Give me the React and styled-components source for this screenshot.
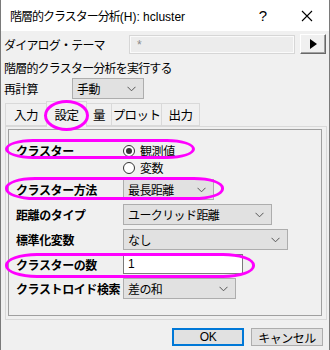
import styled, { createGlobalStyle } from "styled-components";

const GlobalStyle = createGlobalStyle`
  html, body {
    margin: 0;
    padding: 0;
    background: #f0f0f0;
  }
  * {
    box-sizing: border-box;
  }
`;

const Window = styled.div`
  position: relative;
  width: 330px;
  height: 350px;
  background: #f0f0f0;
  border-left: 1px solid #7a7a7a;
  border-right: 1px solid #7a7a7a;
  font-family: "Noto Sans CJK JP", "Noto Sans", sans-serif;
  font-size: 12px;
  color: #000;
  overflow: hidden;
`;

const TitleBar = styled.div`
  height: 31px;
  background: #fff;
  display: flex;
  align-items: center;
  padding-left: 9px;
`;

const Title = styled.div`
  flex: 1;
  font-size: 12px;
  letter-spacing: -1px;
  white-space: nowrap;
`;

const Latin = styled.span`
  font-family: "Liberation Sans", sans-serif;
  letter-spacing: 0;
`;

const TitleButton = styled.div`
  width: 44px;
  height: 31px;
  display: flex;
  align-items: center;
  justify-content: center;
  font-family: "Liberation Sans", sans-serif;
  font-size: 15px;
`;

const Body = styled.div`
  padding: 0 3px 0 3px;
`;

const Row = styled.div`
  display: flex;
  align-items: center;
  height: ${(p) => p.$h || 20}px;
  margin-top: ${(p) => p.$mt || 0}px;
`;

const Label = styled.div`
  width: ${(p) => (p.$w ? `${p.$w}px` : "auto")};
  letter-spacing: -0.8px;
  white-space: nowrap;
`;

const ThemeInput = styled.div`
  width: 166px;
  height: 19px;
  border: 1px solid #d6d6d6;
  box-shadow: inset 0 0 0 1px #fafafa;
  background: #ececec;
  color: #8a8a8a;
  font-family: "Liberation Sans", sans-serif;
  font-size: 12px;
  padding: 2px 0 0 7px;
`;

const ArrowButton = styled.div`
  width: 26px;
  height: 20px;
  margin-left: 5px;
  background: #f0f0f0;
  border-top: 1px solid #fff;
  border-left: 1px solid #fff;
  border-right: 1px solid #696969;
  border-bottom: 1px solid #696969;
  box-shadow: inset -1px -1px 0 #a0a0a0;
  display: flex;
  align-items: center;
  justify-content: center;
`;

const Select = styled.div`
  width: ${(p) => p.$w}px;
  height: ${(p) => p.$h || 21}px;
  border: 1px solid #adadad;
  background: #e1e1e1;
  display: flex;
  align-items: center;
  justify-content: space-between;
  padding: 0 7px 0 4px;
  letter-spacing: -0.6px;
`;

const TextInput = styled.div`
  width: ${(p) => p.$w}px;
  height: 20px;
  border: 1px solid #7a7a7a;
  background: #fff;
  display: flex;
  align-items: center;
  padding-left: 4px;
  font-family: "Liberation Sans", sans-serif;
`;

const TabStrip = styled.div`
  display: flex;
  align-items: flex-end;
  height: 25px;
  margin-top: 2px;
  margin-left: 1px;
  position: relative;
  z-index: 1;
`;

const Tab = styled.div`
  width: ${(p) => p.$w}px;
  height: ${(p) => (p.$active ? 26 : 23)}px;
  margin-bottom: ${(p) => (p.$active ? -1 : 0)}px;
  border: 1px solid #d9d9d9;
  border-bottom: ${(p) => (p.$active ? "none" : "1px solid #d9d9d9")};
  margin-left: ${(p) => (p.$first ? 0 : -1)}px;
  background: #f0f0f0;
  display: flex;
  align-items: center;
  justify-content: center;
  letter-spacing: -0.6px;
  font-size: 12.5px;
`;

const Panel = styled.div`
  margin-left: 1px;
  width: 322px;
  height: 194px;
  border: 1px solid #d9d9d9;
  padding: 2px 4px 3px 2px;
`;

const Inner = styled.div`
  height: 100%;
  border: 1px solid #a0a0a0;
  padding: 12px 0 0 7px;
`;

const FormGrid = styled.div`
  display: grid;
  grid-template-columns: 107px auto;
  align-items: center;
  row-gap: 4px;
`;

const FieldLabel = styled.div`
  font-weight: bold;
  letter-spacing: -0.4px;
  white-space: nowrap;
  align-self: ${(p) => (p.$top ? "start" : "center")};
  line-height: 17px;
`;

const RadioGroup = styled.div`
  display: flex;
  flex-direction: column;
  margin-bottom: -1px;
`;

const RadioItem = styled.div`
  display: flex;
  align-items: center;
  height: 17px;
  letter-spacing: -0.4px;
`;

const RadioCircle = styled.span`
  width: 12px;
  height: 12px;
  border-radius: 50%;
  border: 1px solid #333;
  background: #fff;
  margin-right: 5px;
  display: flex;
  align-items: center;
  justify-content: center;
  &::after {
    content: "";
    width: 6px;
    height: 6px;
    border-radius: 50%;
    background: ${(p) => (p.$checked ? "#333" : "transparent")};
  }
`;

const Footer = styled.div`
  display: flex;
  justify-content: flex-end;
  gap: 7px;
  margin-top: 8px;
  padding-right: 3px;
`;

const Button = styled.div`
  width: 72px;
  height: 18px;
  background: #e1e1e1;
  border: ${(p) => (p.$primary ? "2px solid #0078d7" : "1px solid #adadad")};
  display: flex;
  align-items: center;
  justify-content: center;
  letter-spacing: -0.5px;
  font-family: ${(p) =>
    p.$primary ? '"Liberation Sans", sans-serif' : '"Noto Sans CJK JP", sans-serif'};
`;

const Mark = styled.div`
  position: absolute;
  left: ${(p) => p.$x}px;
  top: ${(p) => p.$y}px;
  width: ${(p) => p.$w}px;
  height: ${(p) => p.$h}px;
  border: 3px solid #f0f;
  border-radius: ${(p) => p.$r};
  pointer-events: none;
  z-index: 5;
`;

const Chevron = () => (
  <svg width="9" height="6" viewBox="0 0 9 6">
    <path d="M0.5 0.8 L4.5 4.8 L8.5 0.8" fill="none" stroke="#555" strokeWidth="1" />
  </svg>
);

const Dropdown = ({ w, children }) => (
  <Select $w={w}>
    <span>{children}</span>
    <Chevron />
  </Select>
);

export default function App() {
  return (
    <Window>
      <GlobalStyle />
      <TitleBar>
        <Title>
          階層的クラスター分析<Latin>(H): hcluster</Latin>
        </Title>
        <TitleButton>?</TitleButton>
        <TitleButton>
          <svg width="12" height="12" viewBox="0 0 12 12">
            <path d="M1 1 L11 11 M11 1 L1 11" stroke="#000" strokeWidth="1.1" />
          </svg>
        </TitleButton>
      </TitleBar>
      <Body>
        <Row $mt={3}>
          <Label $w={125}>ダイアログ・テーマ</Label>
          <ThemeInput>*</ThemeInput>
          <ArrowButton>
            <svg width="8" height="10" viewBox="0 0 8 10">
              <path d="M1 0 L8 5 L1 10 Z" fill="#000" />
            </svg>
          </ArrowButton>
        </Row>
        <Row $mt={3}>
          <Label>階層的クラスター分析を実行する</Label>
        </Row>
        <Row $mt={1} $h={21}>
          <Label $w={68}>再計算</Label>
          <Dropdown w={72}>手動</Dropdown>
        </Row>
        <TabStrip>
          <Tab $w={42} $first>入力</Tab>
          <Tab $w={41} $active>設定</Tab>
          <Tab $w={26}>量</Tab>
          <Tab $w={51}>プロット</Tab>
          <Tab $w={39}>出力</Tab>
        </TabStrip>
        <Panel>
          <Inner>
            <FormGrid>
              <FieldLabel $top>クラスター</FieldLabel>
              <RadioGroup>
                <RadioItem>
                  <RadioCircle $checked />
                  観測値
                </RadioItem>
                <RadioItem>
                  <RadioCircle />
                  変数
                </RadioItem>
              </RadioGroup>
              <FieldLabel>クラスター方法</FieldLabel>
              <Dropdown w={91}>最長距離</Dropdown>
              <FieldLabel>距離のタイプ</FieldLabel>
              <Dropdown w={149}>ユークリッド距離</Dropdown>
              <FieldLabel>標準化変数</FieldLabel>
              <Dropdown w={165}>なし</Dropdown>
              <FieldLabel>クラスターの数</FieldLabel>
              <TextInput $w={120}>1</TextInput>
              <FieldLabel>クラストロイド検索</FieldLabel>
              <Dropdown w={113}>差の和</Dropdown>
            </FormGrid>
          </Inner>
        </Panel>
        <Footer>
          <Button $primary>OK</Button>
          <Button>キャンセル</Button>
        </Footer>
      </Body>
      <Mark $x={43} $y={100} $w={45} $h={31} $r="50%" />
      <Mark $x={4} $y={139} $w={190} $h={20} $r="28px / 10px" />
      <Mark $x={4} $y={177} $w={219} $h={23} $r="30px / 11px" />
      <Mark $x={4} $y={253} $w={250} $h={25} $r="32px / 12px" />
    </Window>
  );
}
